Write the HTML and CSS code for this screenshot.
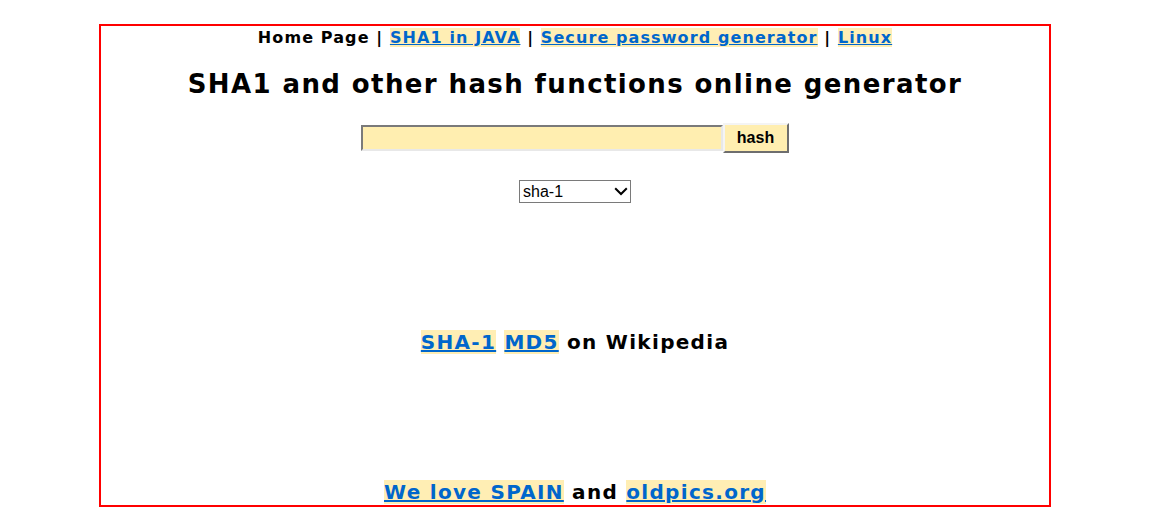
FILE: index.html
```html
<!DOCTYPE html>
<html>
<head>
<meta charset="utf-8">
<title>SHA1 and other hash functions online generator</title>
<link rel="stylesheet" href="styles.css">
</head>
<body>
<div class="frame">
  <p class="nav">Home Page | <a href="#">SHA1 in JAVA</a> | <a href="#">Secure password generator</a> | <a href="#">Linux</a></p>
  <h1 class="title">SHA1 and other hash functions online generator</h1>
  <form class="hash-form">
    <div class="hash-row">
      <input class="hash-input" type="text"><button class="hash-btn" type="button">hash</button>
    </div>
    <div class="algo-row">
      <span class="algo-wrap">
        <select class="algo">
          <option>sha-1</option>
          <option>md5</option>
          <option>sha-256</option>
        </select>
        <svg class="chev" width="14" height="9" viewBox="0 0 14 9" aria-hidden="true"><path d="M1.2 1.3 L7 7 L12.8 1.3" fill="none" stroke="#000" stroke-width="2"/></svg>
      </span>
    </div>
  </form>
  <p class="wiki"><a href="#">SHA-1</a> <a href="#">MD5</a> on Wikipedia</p>
  <p class="love"><a href="#">We love SPAIN</a> and <a href="#">oldpics.org</a></p>
</div>
</body>
</html>
```
FILE: styles.css
```css
html, body {
  margin: 0;
  padding: 0;
  background: #ffffff;
}
body {
  font-family: "DejaVu Sans", Verdana, sans-serif;
  font-weight: bold;
  color: #000000;
}
.frame {
  box-sizing: border-box;
  width: 952px;
  height: 483px;
  margin: 24px auto 0;
  border: 2px solid #ff0000;
  text-align: center;
  overflow: hidden;
}
.frame a {
  color: #0066cc;
  background: #ffeeb4;
  text-decoration: underline;
}
.nav {
  margin: 0;
  padding-top: 2px;
  font-size: 16px;
  line-height: 20px;
  letter-spacing: 1.1px;
}
.title {
  margin: 20px 0 0;
  font-size: 26px;
  line-height: 32px;
  letter-spacing: 1.4px;
}
.hash-form {
  margin: 23px 0 0;
}
.hash-row {
  display: flex;
  justify-content: center;
  align-items: center;
}
.hash-input {
  box-sizing: border-box;
  width: 362px;
  height: 26px;
  margin: 0 0 0 -1px;
  padding: 0 3px;
  border: 2px solid;
  border-color: #7a7a7a #e8e8e8 #e8e8e8 #7a7a7a;
  background: #ffeeb0;
  font: 13px "Liberation Sans", Arial, sans-serif;
}
.hash-btn {
  box-sizing: border-box;
  width: 66px;
  height: 30px;
  margin: 0;
  padding: 0;
  border: 2px solid;
  border-color: #f4f4f4 #6e6e6e #6e6e6e #f4f4f4;
  background: #ffeeb0;
  font: bold 16px "Liberation Sans", Arial, sans-serif;
  color: #000000;
}
.algo-row {
  margin-top: 27px;
  display: flex;
  justify-content: center;
}
.algo-wrap {
  position: relative;
  display: inline-block;
  width: 112px;
  height: 23px;
}
.algo {
  box-sizing: border-box;
  width: 112px;
  height: 23px;
  margin: 0;
  padding: 0 0 0 3px;
  border: 1px solid #7a7a7a;
  border-radius: 0;
  background: #ffffff;
  font: 16px "Liberation Sans", Arial, sans-serif;
  color: #000000;
  -webkit-appearance: none;
  appearance: none;
}
.chev {
  position: absolute;
  right: 3px;
  top: 7px;
  pointer-events: none;
}
.wiki {
  margin: 126px 0 0;
  font-size: 20px;
  line-height: 26px;
  letter-spacing: 1.3px;
}
.love {
  margin: 124px 0 0;
  font-size: 20px;
  line-height: 26px;
  letter-spacing: 1.3px;
}
```
